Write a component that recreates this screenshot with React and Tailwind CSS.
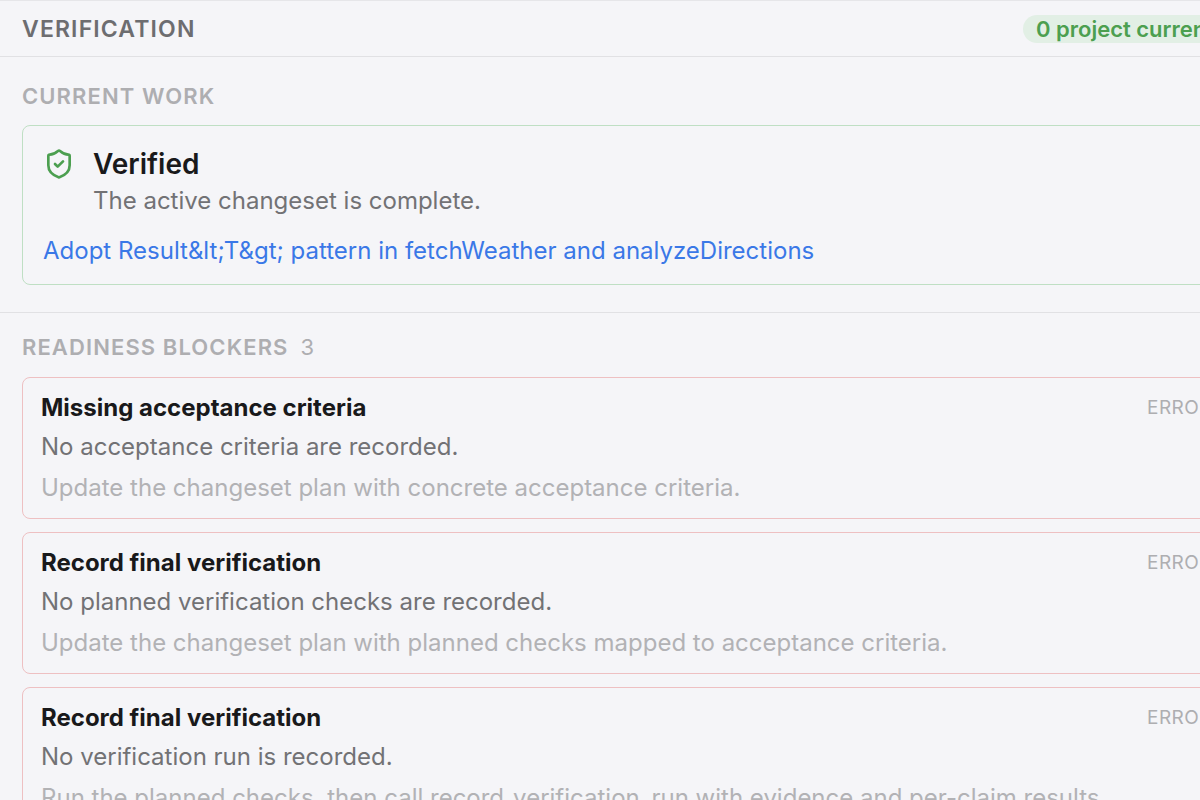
import { ShieldCheck } from "lucide-react";

const blockers = [
  {
    id: "criteria",
    title: "Missing acceptance criteria",
    detail: "No acceptance criteria are recorded.",
    hint: "Update the changeset plan with concrete acceptance criteria.",
    severity: "ERROR",
  },
  {
    id: "checks",
    title: "Record final verification",
    detail: "No planned verification checks are recorded.",
    hint: "Update the changeset plan with planned checks mapped to acceptance criteria.",
    severity: "ERROR",
  },
  {
    id: "run",
    title: "Record final verification",
    detail: "No verification run is recorded.",
    hint: "Run the planned checks, then call record_verification_run with evidence and per-claim results.",
    severity: "ERROR",
  },
];

export default function App() {
  return (
    <div className="h-screen overflow-hidden bg-[#f5f5f8] font-['Inter',sans-serif]">
      {/* the panel runs past the right edge of the window */}
      <main className="-mr-[49px] border-t border-[#e6e6e9]">
        <header className="flex h-14 items-center justify-between border-b border-[#e1e1e4] px-[22px]">
          <h1 className="text-[23px] leading-7 font-semibold tracking-wider text-[#6d6d70]">
            VERIFICATION
          </h1>
          <span className="rounded-full bg-[#e2efe5] px-[13px] text-[22px] leading-7 font-semibold whitespace-nowrap text-[#4c9f50]">
            0 project current
          </span>
        </header>

        <section className="border-b border-[#e1e1e4] px-[22px] pt-[27px] pb-[27px]">
          <SectionTitle>CURRENT WORK</SectionTitle>
          <div className="mt-[17px] rounded-lg border border-[#bfdfc4] px-5 pt-[22px] pb-[18px]">
            <div className="flex gap-[18px]">
              <ShieldCheck className="shrink-0 text-[#4c9f50]" size={32} />
              <div>
                <h3 className="text-[28px] leading-8 font-semibold text-[#19191b]">Verified</h3>
                <p className="mt-1.5 text-[24px] leading-[30px] text-[#727275]">
                  The active changeset is complete.
                </p>
              </div>
            </div>
            <a href="#changeset" className="mt-5 block text-[24px] leading-[30px] text-[#3a78e7]">
              {"Adopt Result&lt;T&gt; pattern in fetchWeather and analyzeDirections"}
            </a>
          </div>
        </section>

        <section className="px-[22px] pt-[22px]">
          <SectionTitle count={blockers.length}>READINESS BLOCKERS</SectionTitle>
          <ul className="mt-[18px] space-y-[13px]">
            {blockers.map((blocker) => (
              <BlockerCard key={blocker.id} {...blocker} />
            ))}
          </ul>
        </section>
      </main>
    </div>
  );
}

function SectionTitle({ children, count }) {
  return (
    <div className="flex gap-3 text-[22px] leading-6 text-[#aeaeb1]">
      <h2 className="font-semibold tracking-wider">{children}</h2>
      {count !== undefined && <span>{count}</span>}
    </div>
  );
}

function BlockerCard({ title, detail, hint, severity }) {
  return (
    <li className="rounded-lg border border-[#eec0c2] pt-[15px] pr-3.5 pb-[15px] pl-[18px]">
      <div className="flex items-center justify-between">
        <h3 className="text-[24px] leading-[30px] font-bold text-[#19191b]">{title}</h3>
        <span className="text-[19px] leading-6 tracking-wide text-[#aeaeb1]">{severity}</span>
      </div>
      <p className="mt-[9px] text-[24px] leading-[30px] text-[#727275]">{detail}</p>
      <p className="mt-[11px] text-[24px] leading-[30px] whitespace-nowrap text-[#b2b2b5]">{hint}</p>
    </li>
  );
}
